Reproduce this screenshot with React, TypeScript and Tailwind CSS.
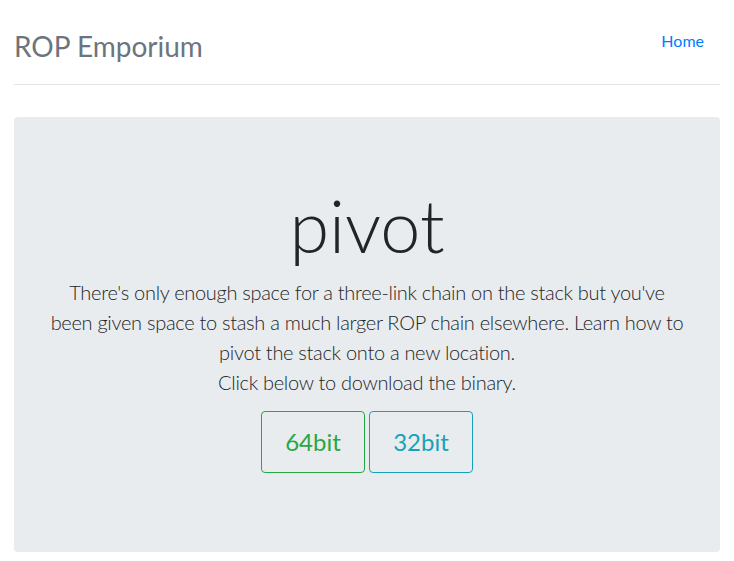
import React from 'react';

const font = { fontFamily: '"Lato", "Open Sans", "Liberation Sans", sans-serif' };

export default function App() {
  return (
    <div className="min-h-[561px] bg-white px-[14px] text-[#212529]" style={font}>
      {/* header */}
      <div className="flex h-[85px] items-start justify-between border-b border-[#e5e5e5]">
        <h3 className="mt-[28px] text-[28px] leading-[36px] font-normal text-[#6c757d]">ROP Emporium</h3>
        <nav className="mt-[29px]">
          <a href="#" className="block px-4 text-[16px] leading-6 text-[#007bff]">Home</a>
        </nav>
      </div>

      {/* jumbotron */}
      <div className="mt-[32px] rounded-[4px] bg-[#e9ecef] px-8 pt-16 pb-16 text-center">
        <h1 className="mb-2 text-[72px] leading-[88px] font-light">pivot</h1>
        <p className="mb-[14px] text-[20px] leading-[30px] font-light tracking-[-0.3px]">
          There's only enough space for a three-link chain on the stack but you've been given space to stash a much larger ROP chain elsewhere. Learn how to pivot the stack onto a new location.
          <br />
          Click below to download the binary.
        </p>
        <p className="mb-[15px] flex justify-center gap-1">
          <a href="#" className="flex h-[62px] w-[104px] items-center justify-center rounded-[4px] border border-[#28a745] text-[24px] text-[#28a745]">64bit</a>
          <a href="#" className="flex h-[62px] w-[104px] items-center justify-center rounded-[4px] border border-[#17a2b8] text-[24px] text-[#17a2b8]">32bit</a>
        </p>
      </div>
    </div>
  );
}
